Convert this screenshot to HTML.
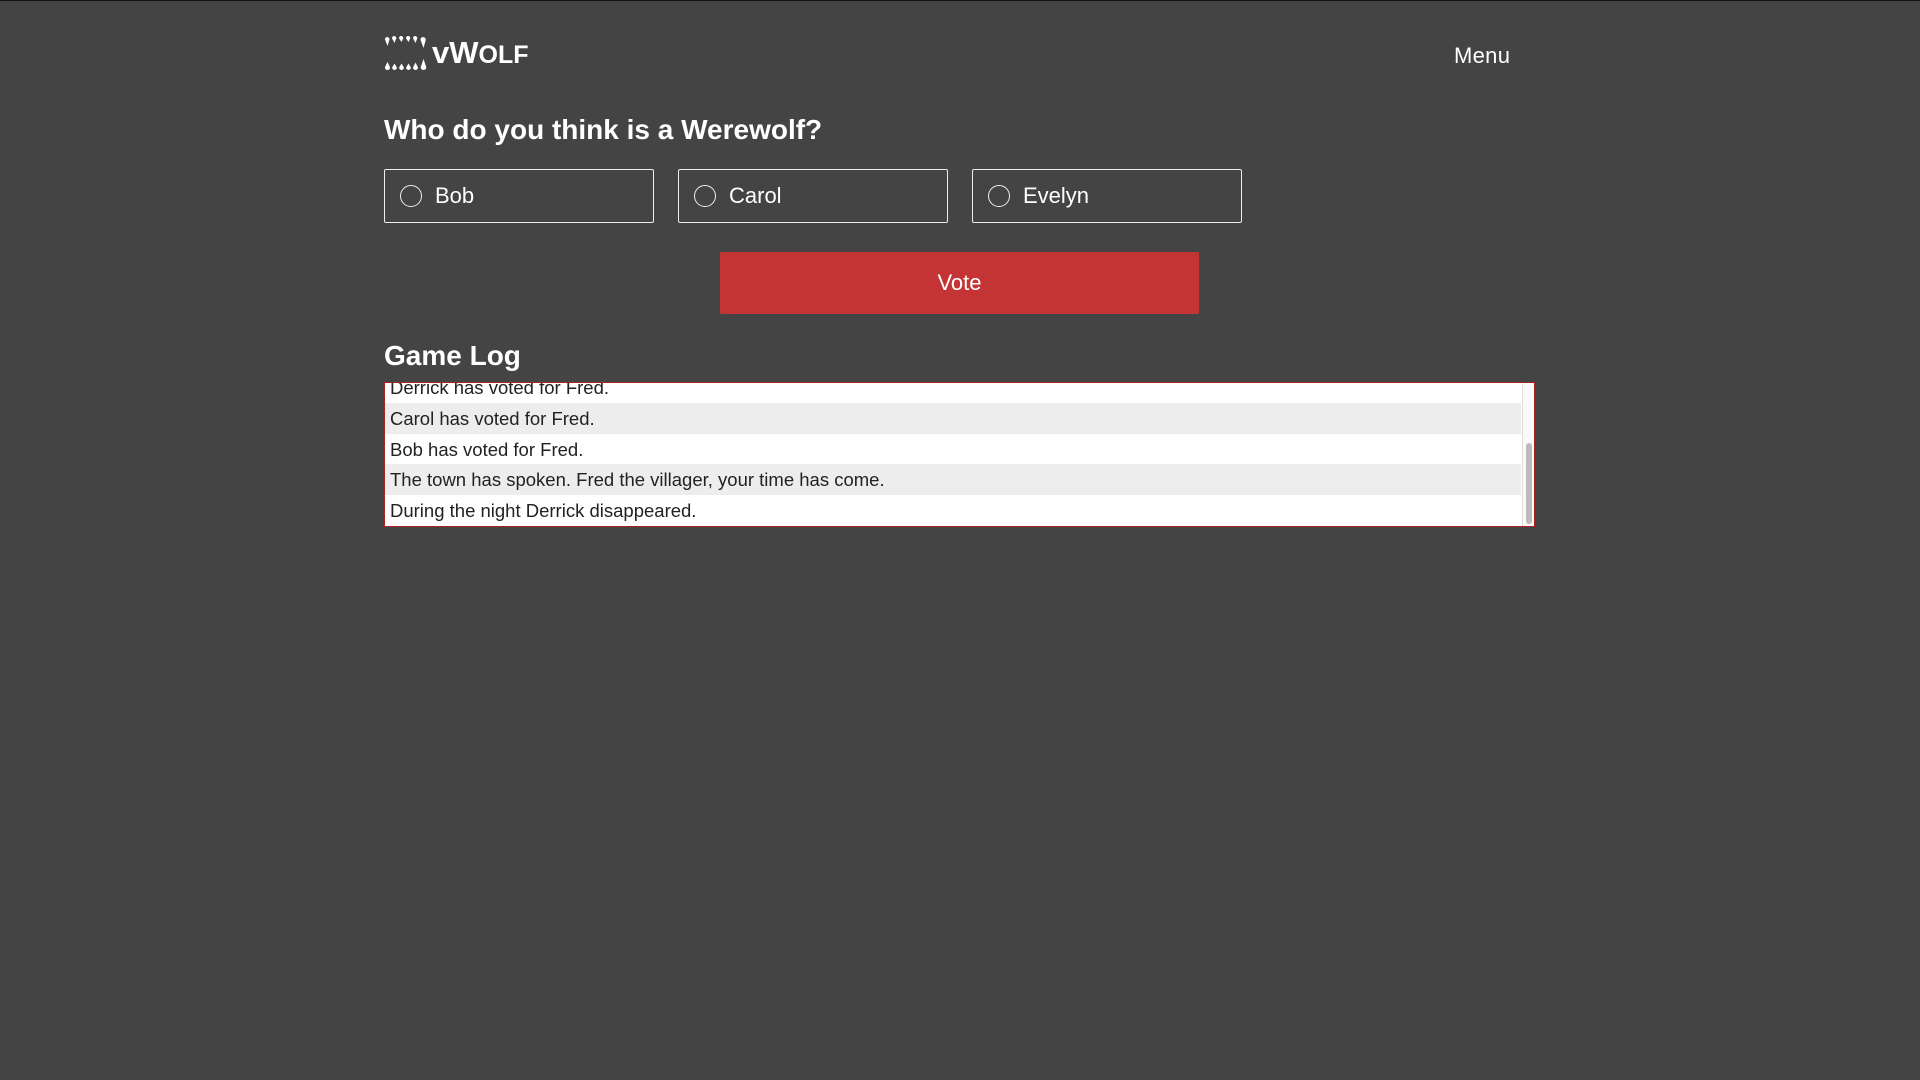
<!DOCTYPE html>
<html><head><meta charset="utf-8"><style>
body{margin:0;width:1920px;height:1080px;background:#444;font-family:"Liberation Sans",sans-serif;color:#fff;overflow:hidden;position:relative;border-top:1px solid #111;box-sizing:border-box}
.abs{position:absolute}
.opt{position:absolute;top:168px;width:268px;height:52px;border:1px solid #eee;border-radius:2px;font-size:22px}
.opt .r{position:absolute;left:15px;top:15px;width:22px;height:22px;border:1.5px solid #eee;border-radius:50%;box-sizing:border-box}
.opt span{position:absolute;left:50px;top:13px}
.log{position:absolute;left:384px;top:381px;width:1149px;height:143px;border:1px solid #a22;background:#fff;overflow:hidden}
.row{position:absolute;left:0;width:1136px;height:31px;color:#222;font-size:18.5px;line-height:31px;padding-left:5px;box-sizing:border-box}
.g{background:#ededed}
</style></head><body>
<div class="abs" style="left:384px;top:34px;width:44px;height:36px">
<svg width="44" height="36" viewBox="0 0 44 36"><g fill="#fff">
<path d="M3 2a2.5 2.5 0 0 1 2.5 2.5L3.5 11 1 4.5A2.5 2.5 0 0 1 3 2z"/>
<path d="M10 1a2.3 2.3 0 0 1 2.3 2.3L10.5 8 8 3.3A2.3 2.3 0 0 1 10 1z"/>
<path d="M17 1a2.3 2.3 0 0 1 2.3 2.3L17.5 7 15 3.3A2.3 2.3 0 0 1 17 1z"/>
<path d="M24 1a2.3 2.3 0 0 1 2.3 2.3L24.5 7 22 3.3A2.3 2.3 0 0 1 24 1z"/>
<path d="M31 1a2.3 2.3 0 0 1 2.3 2.3L31.5 8 29 3.3A2.3 2.3 0 0 1 31 1z"/>
<path d="M39 2a2.8 2.8 0 0 1 2.8 2.8L39.5 13 36.5 4.8A2.8 2.8 0 0 1 39 2z"/>
<path d="M3.5 35a2.6 2.6 0 0 1-2.6-2.6L3.5 27l2.6 5.4A2.6 2.6 0 0 1 3.5 35z"/>
<path d="M10.5 35a2.4 2.4 0 0 1-2.4-2.4L10.5 28.5l2.4 4.1A2.4 2.4 0 0 1 10.5 35z"/>
<path d="M17.5 35a2.4 2.4 0 0 1-2.4-2.4L17.5 28.5l2.4 4.1A2.4 2.4 0 0 1 17.5 35z"/>
<path d="M24.5 35a2.4 2.4 0 0 1-2.4-2.4L24.5 28.5l2.4 4.1A2.4 2.4 0 0 1 24.5 35z"/>
<path d="M31.5 35a2.5 2.5 0 0 1-2.5-2.5L31.5 27.5l2.5 5A2.5 2.5 0 0 1 31.5 35z"/>
<path d="M39.5 35a2.8 2.8 0 0 1-2.8-2.8L39.5 24l2.8 8.2A2.8 2.8 0 0 1 39.5 35z"/>
</g></svg></div>
<div class="abs" style="left:432px;top:34px;font-size:31px;font-weight:bold">v<span>W</span><span style="font-size:25px">OLF</span></div>
<div class="abs" style="left:1454px;top:42px;font-size:22px;letter-spacing:0.3px">Menu</div>
<div class="abs" style="left:384px;top:113px;font-size:28px;font-weight:bold">Who do you think is a Werewolf?</div>
<div class="opt" style="left:384px"><div class="r"></div><span>Bob</span></div>
<div class="opt" style="left:678px"><div class="r"></div><span>Carol</span></div>
<div class="opt" style="left:972px"><div class="r"></div><span>Evelyn</span></div>
<div class="abs" style="left:720px;top:251px;width:479px;height:62px;background:#c43434;border-radius:2px;font-size:22px;text-align:center;line-height:62px">Vote</div>
<div class="abs" style="left:384px;top:339px;font-size:28px;font-weight:bold">Game Log</div>
<div class="log">
<div class="row" style="top:-11px">Derrick has voted for Fred.</div>
<div class="row g" style="top:20px">Carol has voted for Fred.</div>
<div class="row" style="top:51px">Bob has voted for Fred.</div>
<div class="row g" style="top:81px">The town has spoken. Fred the villager, your time has come.</div>
<div class="row" style="top:112px">During the night Derrick disappeared.</div>
<div class="abs" style="left:1137px;top:0;width:12px;height:143px;background:#fafafa;border-left:1px solid #ddd"></div>
<div class="abs" style="left:1141px;top:60px;width:6px;height:81px;background:#bbb;border-radius:3px"></div>
</div>
</body></html>
